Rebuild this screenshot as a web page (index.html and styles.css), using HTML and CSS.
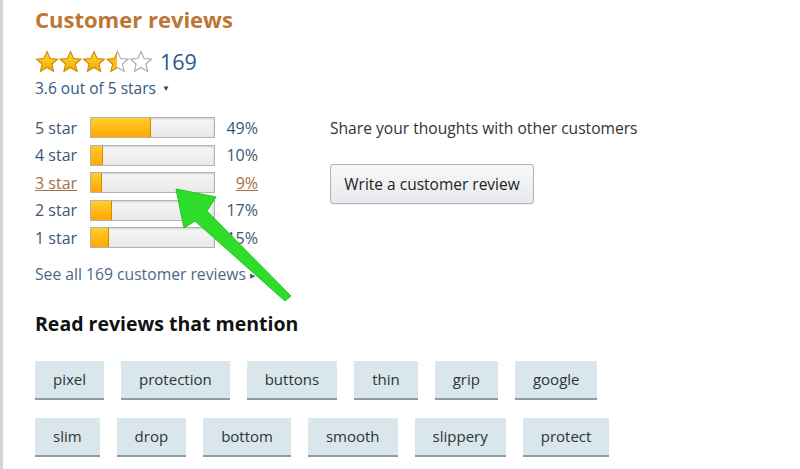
FILE: index.html
```html
<!DOCTYPE html>
<html>
<head>
<meta charset="utf-8">
<link rel="stylesheet" href="styles.css">
</head>
<body>
<div class="page">
  <div class="top">
    <div class="summary">
      <h2 class="title">Customer reviews</h2>
      <div class="stars-row">
        <svg class="stars" width="118" height="24" viewBox="0 0 118 24">
          <defs>
            <linearGradient id="gold" x1="0" y1="0" x2="0" y2="1">
              <stop offset="0" stop-color="#ffdc3a"/>
              <stop offset="1" stop-color="#f4a700"/>
            </linearGradient>
            <linearGradient id="halffill" x1="0" y1="0" x2="1" y2="0">
              <stop offset="0" stop-color="#fbbd14"/>
              <stop offset="0.5" stop-color="#fbbd14"/>
              <stop offset="0.5" stop-color="#ffffff"/>
              <stop offset="1" stop-color="#ffffff"/>
            </linearGradient>
            <linearGradient id="halfstroke" x1="0" y1="0" x2="1" y2="0">
              <stop offset="0" stop-color="#d08700"/>
              <stop offset="0.5" stop-color="#d08700"/>
              <stop offset="0.5" stop-color="#a8a8a8"/>
              <stop offset="1" stop-color="#a8a8a8"/>
            </linearGradient>
            <path id="star" d="M12 1.5l3.1 7 7.4.6-5.6 4.9 1.7 7.4L12 17.5l-6.6 3.9 1.7-7.4L1.5 9.1l7.4-.6z"/>
          </defs>
          <use href="#star" x="0" fill="url(#gold)" stroke="#d08700" stroke-width="1.1"/>
          <use href="#star" x="23.5" fill="url(#gold)" stroke="#d08700" stroke-width="1.1"/>
          <use href="#star" x="47" fill="url(#gold)" stroke="#d08700" stroke-width="1.1"/>
          <path transform="translate(70.5 0)" d="M12 1.5l3.1 7 7.4.6-5.6 4.9 1.7 7.4L12 17.5l-6.6 3.9 1.7-7.4L1.5 9.1l7.4-.6z" fill="url(#halffill)" stroke="url(#halfstroke)" stroke-width="1.1"/>
          <use href="#star" x="94" fill="#fff" stroke="#a8a8a8" stroke-width="1.1"/>
        </svg>
        <span class="count">169</span>
      </div>
      <div class="rating">3.6 out of 5 stars <span class="caret">▼</span></div>
      <div class="histogram">
        <div class="hrow"><span class="hlabel">5 star</span><span class="bar"><span class="fill" style="width:49%"></span></span><span class="pct">49%</span></div>
        <div class="hrow"><span class="hlabel">4 star</span><span class="bar"><span class="fill" style="width:10%"></span></span><span class="pct">10%</span></div>
        <div class="hrow hover"><span class="hlabel">3 star</span><span class="bar"><span class="fill" style="width:9%"></span></span><span class="pct">9%</span></div>
        <div class="hrow"><span class="hlabel">2 star</span><span class="bar"><span class="fill" style="width:17%"></span></span><span class="pct">17%</span></div>
        <div class="hrow"><span class="hlabel">1 star</span><span class="bar"><span class="fill" style="width:15%"></span></span><span class="pct">15%</span></div>
      </div>
      <div class="see-all">See all 169 customer reviews <span class="tri">▶</span></div>
    </div>
    <div class="share">
      <div class="share-text">Share your thoughts with other customers</div>
      <button class="write">Write a customer review</button>
    </div>
  </div>
  <h3 class="mention">Read reviews that mention</h3>
  <div class="tags">
    <span class="tag">pixel</span>
    <span class="tag">protection</span>
    <span class="tag">buttons</span>
    <span class="tag">thin</span>
    <span class="tag">grip</span>
    <span class="tag">google</span>
    <span class="tag">slim</span>
    <span class="tag">drop</span>
    <span class="tag">bottom</span>
    <span class="tag">smooth</span>
    <span class="tag">slippery</span>
    <span class="tag">protect</span>
  </div>
  <svg class="arrow" width="800" height="469" viewBox="0 0 800 469">
    <polygon points="176,189 216,197 207,211 291,296 285,301 195,221 184,228" fill="#2edc2a" stroke="#25c422" stroke-width="1" stroke-linejoin="round"/>
  </svg>
</div>
</body>
</html>
```
FILE: styles.css
```css
html, body {
  margin: 0;
  padding: 0;
  background: #fff;
}
body {
  font-family: "Open Sans", "Noto Sans", sans-serif;
  color: #333;
}
.page {
  position: relative;
  width: 800px;
  height: 469px;
  box-sizing: border-box;
  border-left: 3px solid #d4d4d4;
  padding: 6px 0 0 32px;
  overflow: hidden;
}
.top {
  display: flex;
}
.summary {
  width: 295px;
}
.title {
  margin: 0;
  font-size: 22px;
  font-weight: 700;
  color: #bd7634;
  line-height: 26px;
}
.stars-row {
  display: flex;
  align-items: center;
  margin-top: 17px;
  height: 26px;
}
.stars {
  display: block;
}
.count {
  margin-left: 7px;
  font-size: 21.5px;
  color: #24598c;
  line-height: 26px;
}
.rating {
  margin-top: 3px;
  font-size: 15.5px;
  color: #34597f;
  line-height: 20px;
}
.caret {
  font-size: 8px;
  vertical-align: 3px;
  margin-left: 2px;
  color: #444;
}
.histogram {
  margin-top: 19px;
  display: flex;
  flex-direction: column;
  gap: 6.5px;
}
.hrow {
  display: flex;
  align-items: center;
  height: 21px;
  font-size: 16px;
  color: #3b5776;
}
.hlabel {
  width: 55px;
}
.bar {
  position: relative;
  width: 123px;
  height: 19px;
  border: 1px solid #b3b3b3;
  background: linear-gradient(#f6f6f6, #e9e9e9);
  box-shadow: inset 0 1px 2px rgba(0,0,0,0.15);
}
.fill {
  display: block;
  height: 100%;
  box-sizing: border-box;
  border-right: 1px solid #d38c00;
  background: linear-gradient(#ffcd2e, #ffa800);
}
.pct {
  width: 43px;
  text-align: right;
}
.hover .hlabel,
.hover .pct {
  color: #a86e46;
  text-decoration: underline;
}
.see-all {
  margin-top: 16px;
  font-size: 15.7px;
  color: #4d6886;
  line-height: 20px;
}
.tri {
  font-size: 7px;
  vertical-align: 2px;
  color: #555;
}
.share {
  padding-top: 111px;
}
.share-text {
  font-size: 15.6px;
  color: #333;
  line-height: 22px;
}
.write {
  display: block;
  margin-top: 25px;
  width: 204px;
  height: 40px;
  border: 1px solid #adb1b8;
  border-radius: 3px;
  background: linear-gradient(#f8f8f8, #e7e9ec);
  font-family: inherit;
  font-size: 15.5px;
  color: #222;
  box-shadow: 0 1px 0 rgba(0,0,0,0.05);
}
.mention {
  margin: 25px 0 0 0;
  font-size: 19.5px;
  font-weight: 700;
  color: #111;
  line-height: 26px;
}
.tags {
  margin-top: 24px;
  width: 640px;
  display: flex;
  flex-wrap: wrap;
  column-gap: 17px;
  row-gap: 18px;
}
.tag {
  box-sizing: border-box;
  height: 39px;
  padding: 0 18px;
  background: #d9e6eb;
  border-bottom: 2px solid #8e9da4;
  font-size: 15px;
  color: #2e3436;
  line-height: 37px;
}
.arrow {
  position: absolute;
  left: -3px;
  top: 0;
  pointer-events: none;
}
```
